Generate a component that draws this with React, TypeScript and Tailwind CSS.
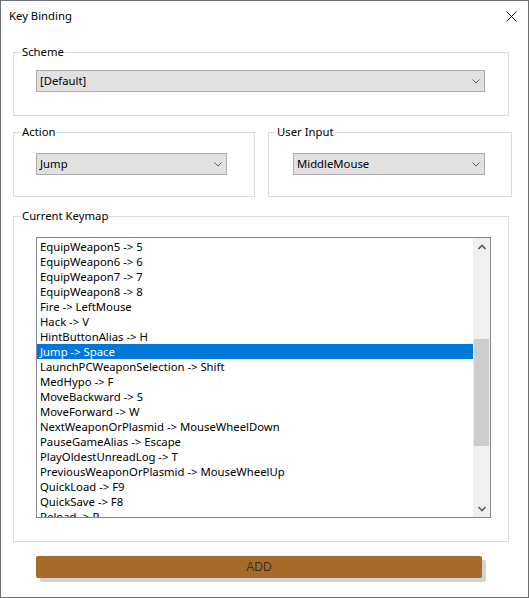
import type { ReactNode } from "react";

const keymap = [
  "EquipWeapon5 -> 5",
  "EquipWeapon6 -> 6",
  "EquipWeapon7 -> 7",
  "EquipWeapon8 -> 8",
  "Fire -> LeftMouse",
  "Hack -> V",
  "HintButtonAlias -> H",
  "Jump -> Space",
  "LaunchPCWeaponSelection -> Shift",
  "MedHypo -> F",
  "MoveBackward -> S",
  "MoveForward -> W",
  "NextWeaponOrPlasmid -> MouseWheelDown",
  "PauseGameAlias -> Escape",
  "PlayOldestUnreadLog -> T",
  "PreviousWeaponOrPlasmid -> MouseWheelUp",
  "QuickLoad -> F9",
  "QuickSave -> F8",
  "Reload -> R",
];

function GroupBox({
  label,
  className,
  children,
}: {
  label: string;
  className?: string;
  children: ReactNode;
}) {
  return (
    <fieldset className={"shrink-0 border border-[#dcdcdc] " + (className ?? "")}>
      <legend className="ml-[7px] px-[1px] text-[11.3px] leading-[16px] text-black">
        {label}
      </legend>
      {children}
    </fieldset>
  );
}

function ComboBox({ value, className }: { value: string; className: string }) {
  return (
    <div
      className={
        "flex h-[22px] items-center justify-between border border-[#adadad] bg-[#e1e1e1] pl-[3px] " +
        className
      }
    >
      <span className="text-[11.3px] leading-[16px] text-black">{value}</span>
      <span className="flex w-[17px] items-center justify-center">
        <svg width="8" height="5" viewBox="0 0 8 5">
          <path d="M0.5 0.5 L4 4 L7.5 0.5" fill="none" stroke="#606060" strokeWidth="1" />
        </svg>
      </span>
    </div>
  );
}

function ScrollBar() {
  return (
    <div className="flex w-[17px] flex-col bg-[#f0f0f0]">
      <div className="flex h-[17px] items-center justify-center">
        <svg width="8" height="6" viewBox="0 0 8 6">
          <path d="M0.5 5 L4 1.5 L7.5 5" fill="none" stroke="#606060" strokeWidth="1.6" />
        </svg>
      </div>
      <div className="flex-1 px-[1px] pt-[84px]">
        <div className="h-[107px] bg-[#cdcdcd]" />
      </div>
      <div className="flex h-[17px] items-center justify-center">
        <svg width="8" height="6" viewBox="0 0 8 6">
          <path d="M0.5 1 L4 4.5 L7.5 1" fill="none" stroke="#606060" strokeWidth="1.6" />
        </svg>
      </div>
    </div>
  );
}

export default function App() {
  return (
    <div
      className="flex h-[598px] w-[529px] flex-col border border-[#707070] bg-white text-black"
      style={{ fontFamily: '"Noto Sans", "Open Sans", sans-serif' }}
    >
      <div className="flex h-[30px] items-center justify-between pl-[8px] pr-[11px]">
        <span className="text-[11.3px] leading-[16px]">Key Binding</span>
        <svg width="11" height="11" viewBox="0 0 11 11">
          <path d="M0.5 0.5 L10.5 10.5 M10.5 0.5 L0.5 10.5" stroke="#111" strokeWidth="1" />
        </svg>
      </div>

      <div className="flex flex-col px-[12px]">
        <GroupBox label="Scheme" className="mt-[13px] w-[496px]">
          <div className="pb-[23px] pl-[22px] pt-[10px]">
            <ComboBox value="[Default]" className="w-[449px]" />
          </div>
        </GroupBox>

        <div className="mt-[8px] flex">
          <GroupBox label="Action" className="w-[242px]">
            <div className="pb-[21px] pl-[22px] pt-[13px]">
              <ComboBox value="Jump" className="w-[191px]" />
            </div>
          </GroupBox>
          <GroupBox label="User Input" className="ml-[13px] w-[244px]">
            <div className="pb-[21px] pl-[24px] pt-[13px]">
              <ComboBox value="MiddleMouse" className="w-[192px]" />
            </div>
          </GroupBox>
        </div>

        <GroupBox label="Current Keymap" className="mt-[11px] w-[496px]">
          <div className="pb-[23px] pl-[22px] pt-[13px]">
            <div className="flex h-[281px] w-[455px] border border-[#828790] bg-white">
              <div className="flex-1 overflow-hidden pt-[1px]">
                {keymap.map((item) => (
                  <div
                    key={item}
                    className={
                      "h-[15px] whitespace-nowrap pl-[3px] text-[11.3px] leading-[15px] " +
                      (item === "Jump -> Space" ? "bg-[#0078d7] text-white" : "text-black")
                    }
                  >
                    {item}
                  </div>
                ))}
              </div>
              <ScrollBar />
            </div>
          </div>
        </GroupBox>

        <button
          className="ml-[23px] mt-[14px] h-[22px] w-[446px] rounded-[2px] bg-[#a66a2b] text-[12px] text-[#3a3226] shadow-[4px_4px_0_#d3d3d3]"
          style={{ fontFamily: '"Liberation Sans", Arial, sans-serif' }}
        >
          ADD
        </button>
      </div>
    </div>
  );
}
